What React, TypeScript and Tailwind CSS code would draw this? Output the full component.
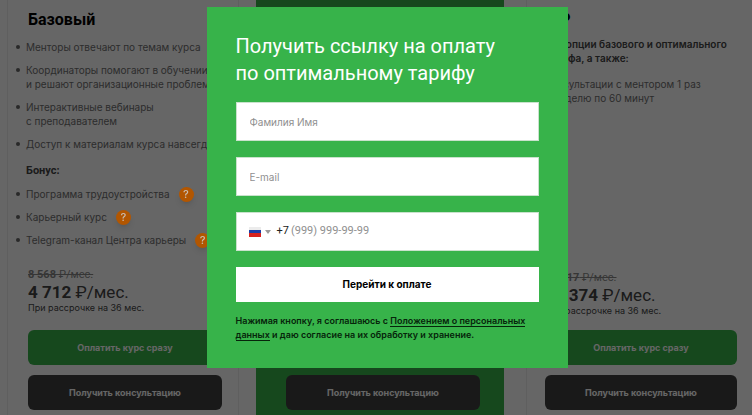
import type { ReactNode } from 'react';

interface PlanItem {
  text: ReactNode;
  hint?: boolean;
}

interface PriceProps {
  oldPrice: string;
  price: string;
}

const baseItems: PlanItem[] = [
  { text: 'Менторы отвечают по темам курса' },
  { text: <>Координаторы помогают в обучении<br />и решают организационные проблемы</> },
  { text: <>Интерактивные вебинары<br />с преподавателем</> },
  { text: 'Доступ к материалам курса навсегда' },
];

const bonusItems: PlanItem[] = [
  { text: 'Программа трудоустройства', hint: true },
  { text: 'Карьерный курс', hint: true },
  { text: 'Telegram-канал Центра карьеры', hint: true },
];

function ItemList({ items }: { items: PlanItem[] }) {
  return (
    <ul className="space-y-[9px] whitespace-nowrap font-['Inter',sans-serif] text-[10px] leading-[14px] text-[#707070]">
      {items.map((item, index) => (
        <li key={index} className="flex items-start">
          <span className="mt-[5px] mr-[6px] h-1 w-1 shrink-0 rounded-full bg-[#666]" />
          <span>{item.text}</span>
          {item.hint && (
            <button
              type="button"
              aria-label="Подробнее"
              className="relative z-20 -my-1 ml-[9px] h-[15px] w-[15px] shrink-0 self-center rounded-full bg-[#b25600] text-[11px] leading-[15px] font-medium text-[#c9bdb0] shadow-md"
            >
              ?
            </button>
          )}
        </li>
      ))}
    </ul>
  );
}

function Price({ oldPrice, price }: PriceProps) {
  return (
    <div className="text-[#444]">
      <p className="text-[11px] leading-[14px] text-[#888] line-through">
        <b>{oldPrice}</b> ₽/мес.
      </p>
      <p className="text-[17px] leading-5">
        <b>{price}</b> ₽/мес.
      </p>
      <p className="font-['Inter',sans-serif] text-[9px] leading-3">При рассрочке на 36 мес.</p>
    </div>
  );
}

function PlanButtons() {
  return (
    <div className="mt-4 flex flex-col gap-[10px] font-['Inter',sans-serif] text-[9px] font-bold text-white">
      <button type="button" className="h-[35px] rounded-md bg-[#37b34a]">
        Оплатить курс сразу
      </button>
      <button type="button" className="h-[35px] rounded-md bg-[#404040]">
        Получить консультацию
      </button>
    </div>
  );
}

function Plans() {
  return (
    <main className="-mr-[18px] -ml-1 grid min-h-screen grid-cols-3">
      <section className="mr-[15px] ml-[11px] flex flex-col border-x border-[#eee] pt-[9px] pr-4 pb-[5px] pl-5">
        <h2 className="mb-[9px] text-base leading-[22px] font-bold">Базовый</h2>
        <div className="-ml-3">
          <ItemList items={baseItems} />
          <h3 className="mt-[13px] mb-[9px] ml-[10px] text-[11px] leading-[14px] font-bold text-[#444]">Бонус:</h3>
          <ItemList items={bonusItems} />
        </div>
        <div className="mt-auto">
          <Price oldPrice="8 568" price="4 712" />
        </div>
        <PlanButtons />
      </section>

      <section className="mr-2 ml-0.5 flex flex-col bg-[#37b34a] pt-[9px] pr-6 pb-[5px] pl-[30px]">
        <h2 className="text-base leading-[22px] font-bold text-white">Оптимальный</h2>
        <div className="mt-auto">
          <PlanButtons />
        </div>
      </section>

      <section className="mr-3 ml-[14px] flex flex-col border-x border-[#eee] pt-[9px] pr-5 pb-[5px] pl-[18px]">
        <h2 className="mb-[6px] text-base leading-[22px] font-bold">VIP</h2>
        <div className="whitespace-nowrap font-['Inter',sans-serif] text-[10px] leading-[14px] text-[#707070]">
          <h3 className="mb-3 font-semibold text-[#444]">Все опции базового и оптимального<br />тарифа, а также:</h3>
          <p>Консультации с ментором 1 раз<br />в неделю по 60 минут</p>
        </div>
        <div className="mt-auto -mb-[3px]">
          <Price oldPrice="18 517" price="10 374" />
        </div>
        <PlanButtons />
      </section>
    </main>
  );
}

function Flag() {
  return (
    <svg viewBox="0 0 12 10" className="h-[10px] w-3" aria-hidden="true">
      <rect width="12" height="10" fill="#ececec" />
      <rect y="3" width="12" height="4" fill="#1c3fa8" />
      <rect y="6" width="12" height="4" fill="#d8231f" />
    </svg>
  );
}

function PaymentForm() {
  return (
    <form className="w-full max-w-[361px] bg-[#37b34a] px-[29px] pt-[26px] pb-[26px]">
      <h1 id="payment-title" className="mb-[15px] text-[20px] leading-[27px] text-white">
        Получить ссылку на оплату<br />по оптимальному тарифу
      </h1>
      <div className="flex flex-col gap-4 text-[11px]">
        <input
          type="text"
          aria-label="Фамилия Имя"
          placeholder="Фамилия Имя"
          className="h-[39px] border border-[#c9e2cc] bg-white px-[13px] font-['Inter',sans-serif] text-[10px] placeholder:text-[#8f8f8f]"
        />
        <input
          type="email"
          aria-label="E-mail"
          placeholder="E-mail"
          className="h-[39px] border border-[#c9e2cc] bg-white px-[13px] font-['Inter',sans-serif] text-[10px] placeholder:text-[#8f8f8f]"
        />
        <div className="flex h-[39px] items-center border border-[#c9e2cc] bg-white px-3">
          <button type="button" aria-label="Код страны" className="flex items-center gap-1">
            <Flag />
            <svg viewBox="0 0 6 4" className="h-1 w-[6px]" aria-hidden="true">
              <path d="M0 0h6L3 4z" fill="#9a9a9a" />
            </svg>
          </button>
          <label htmlFor="phone" className="mr-[2px] ml-[6px] text-[#222]">+7</label>
          <input
            id="phone"
            type="tel"
            placeholder="(999) 999-99-99"
            className="min-w-0 flex-1 placeholder:text-[#8f8f8f]"
          />
        </div>
        <button type="submit" className="h-[35px] bg-white font-['Inter',sans-serif] text-[10px] font-bold text-black">
          Перейти к оплате
        </button>
      </div>
      <p className="mt-3 font-['Inter',sans-serif] text-[9px] leading-[14px] font-semibold text-[#06250b]">
        Нажимая кнопку, я соглашаюсь с{' '}
        <a href="#" className="border-b border-[#06250b]">Положением о персональных данных</a>
        {' '}и даю согласие на их обработку и хранение.
      </p>
    </form>
  );
}

export default function App() {
  return (
    <div className="relative min-h-screen overflow-hidden bg-white font-['Roboto','Liberation_Sans',sans-serif] text-black">
      <Plans />
      <div className="fixed inset-0 z-10 bg-black/60" />
      <div
        role="dialog"
        aria-modal="true"
        aria-labelledby="payment-title"
        className="absolute inset-0 z-30 flex items-start justify-center pt-[7px] pl-[22px]"
      >
        <PaymentForm />
      </div>
    </div>
  );
}
